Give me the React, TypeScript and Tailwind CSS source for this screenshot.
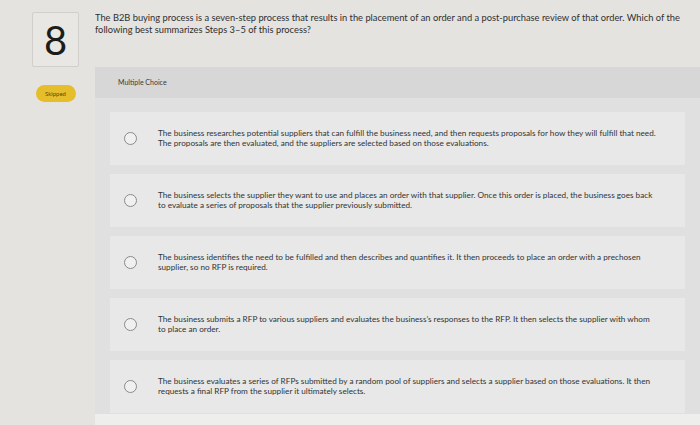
const options: string[][] = [
  [
    'The business researches potential suppliers that can fulfill the business need, and then requests proposals for how they will fulfill that need.',
    'The proposals are then evaluated, and the suppliers are selected based on those evaluations.',
  ],
  [
    'The business selects the supplier they want to use and places an order with that supplier. Once this order is placed, the business goes back',
    'to evaluate a series of proposals that the supplier previously submitted.',
  ],
  [
    'The business identifies the need to be fulfilled and then describes and quantifies it. It then proceeds to place an order with a prechosen',
    'supplier, so no RFP is required.',
  ],
  [
    'The business submits a RFP to various suppliers and evaluates the business’s responses to the RFP. It then selects the supplier with whom',
    'to place an order.',
  ],
  [
    'The business evaluates a series of RFPs submitted by a random pool of suppliers and selects a supplier based on those evaluations. It then',
    'requests a final RFP from the supplier it ultimately selects.',
  ],
];

export default function App() {
  return (
    <div className="w-[700px] h-[425px] overflow-hidden flex bg-[#e4e3e0] text-[#2f2f2f] font-['Lato','Open_Sans',sans-serif]">
      <div className="w-[95px] shrink-0 pl-[32px] pt-[12px]">
        <div className="w-[47px] flex flex-col items-center">
          <div className="w-[47px] h-[55px] border border-[#d0cfcb] bg-[#e8e7e4] rounded-[2px] flex items-center justify-center">
            <span className="text-[40px] leading-none text-[#1c1c1c]">8</span>
          </div>
          <div className="mt-[18px] w-[40px] h-[17px] rounded-full bg-[#e6be2c] flex items-center justify-center text-[6px] text-[#5a4a10]">
            Skipped
          </div>
        </div>
      </div>

      <div className="flex-1 flex flex-col min-w-0">
        <div className="h-[67px] pt-[12px] text-[9.3px] leading-[12px] whitespace-nowrap overflow-hidden">
          <div>
            The B2B buying process is a seven-step process that results in the placement of an order and a post-purchase review of that order. Which of the
          </div>
          <div>following best summarizes Steps 3–5 of this process?</div>
        </div>

        <div className="flex-1 flex flex-col bg-[#dfe0df]">
          <div className="h-[31px] shrink-0 bg-[#d6d7d6] pl-[23px] flex items-center text-[7px] text-[#3a3a3a]">
            Multiple Choice
          </div>
          <div className="flex flex-col gap-[9px] px-[15px] pt-[14px]">
            {options.map((lines, i) => (
              <div key={i} className="h-[53px] bg-[#e7e8e7] flex items-center pl-[14px]">
                <div className="w-[13px] h-[13px] rounded-full border border-[#8a8a8a] bg-[#f0f0f0] shrink-0" />
                <div className="ml-[21px] text-[8.2px] leading-[9.5px] text-[#333] whitespace-nowrap">
                  {lines.map((l, j) => (
                    <div key={j}>{l}</div>
                  ))}
                </div>
              </div>
            ))}
          </div>
          <div className="flex-1" />
          <div className="h-[11px] bg-[#eeeeed]" />
        </div>
      </div>
    </div>
  );
}
